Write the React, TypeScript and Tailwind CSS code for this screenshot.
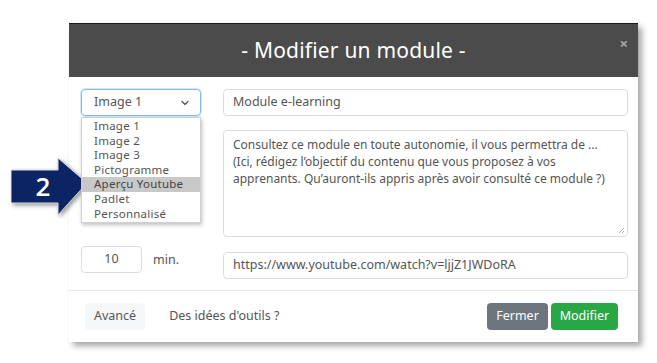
import { ChevronDown } from 'lucide-react';

const options = ['Image 1', 'Image 2', 'Image 3', 'Pictogramme', 'Aperçu Youtube', 'Padlet', 'Personnalisé'];

export default function App() {
  return (
    <div
      className="relative w-[657px] h-[363px] bg-white overflow-hidden text-[#555]"
      style={{ fontFamily: "'Noto Sans', sans-serif" }}
    >
      <div className="absolute left-[69px] top-[23px] w-[569px] bg-white shadow-[4px_4px_6px_rgba(0,0,0,0.35)]">
        {/* Header */}
        <div className="relative h-[54px] bg-[#4b4b4b] border-t border-[#1a1a1a] flex items-center justify-center">
          <h1 className="text-[21px] text-white tracking-[0.2px]">- Modifier un module -</h1>
          <span className="absolute right-[10px] top-[12px] text-[15px] font-bold text-[#a8a8a8] leading-none">×</span>
        </div>

        {/* Body */}
        <div className="pl-3 pr-[10px] pt-3 pb-[11px] text-[12.5px]">
          <div className="flex gap-[22px]">
            <div className="relative w-[120px] shrink-0">
              <div className="h-[27px] rounded-[4px] border border-[#86b7f0] shadow-[0_0_0_1px_rgba(128,189,255,0.35)] flex items-center justify-between pl-3 pr-[9px]">
                <span>Image 1</span>
                <ChevronDown size={12} strokeWidth={2.5} className="text-[#555]" />
              </div>
              {/* Dropdown menu */}
              <div className="absolute left-0 top-[28px] z-10 w-[120px] bg-white border border-[#d0d0d0] shadow-[1px_2px_4px_rgba(0,0,0,0.25)] py-[1px]">
                {options.map((o) => (
                  <div
                    key={o}
                    className={`h-[14.6px] leading-[14.6px] pl-3 text-[11.5px] tracking-[0.25px] ${o === 'Aperçu Youtube' ? 'bg-[#c8c8c8] text-[#444]' : ''}`}
                  >
                    {o}
                  </div>
                ))}
              </div>
            </div>
            <div className="flex-1 h-[27px] rounded-[4px] border border-[#dadde0] flex items-center px-[9px]">
              Module e-learning
            </div>
          </div>

          <div className="flex gap-[22px] mt-[14px]">
            <div className="w-[120px] shrink-0" />
            <div className="relative flex-1 h-[107px] rounded-[4px] border border-[#dadde0] px-[9px] pt-[5px] leading-[17px] text-[12px] whitespace-nowrap">
              Consultez ce module en toute autonomie, il vous permettra de ...
              <br />
              (Ici, rédigez l’objectif du contenu que vous proposez à vos
              <br />
              apprenants. Qu’auront-ils appris après avoir consulté ce module ?)
              <svg className="absolute right-[2px] bottom-[2px]" width="7" height="7" viewBox="0 0 7 7">
                <path d="M1 6 L6 1 M4 6 L6 4" stroke="#999" strokeWidth="0.8" />
              </svg>
            </div>
          </div>

          <div className="flex mt-[9px]">
            <div className="w-[142px] shrink-0 flex items-start">
              <div className="w-[61px] h-[27px] rounded-[4px] border border-[#dadde0] flex items-center justify-center">
                10
              </div>
              <span className="ml-[11px] mt-[5px]">min.</span>
            </div>
            <div className="flex-1 mt-[6px] h-[27px] rounded-[4px] border border-[#dadde0] flex items-center px-[9px]">
              https://www.youtube.com/watch?v=ljjZ1JWDoRA
            </div>
          </div>
        </div>

        {/* Footer */}
        <div className="border-t border-[#e6e6e6] flex items-center pl-4 pr-5 py-3 text-[12.5px]">
          <button className="h-[27px] px-[9px] rounded-[4px] bg-[#f6f7f8] text-[#555]">Avancé</button>
          <span className="ml-6">Des idées d'outils ?</span>
          <div className="ml-auto flex gap-[3px]">
            <button className="h-[27px] w-[61px] rounded-[4px] bg-[#6c757d] text-white">Fermer</button>
            <button className="h-[27px] w-[67px] rounded-[4px] bg-[#28a745] text-white">Modifier</button>
          </div>
        </div>
      </div>

      {/* Step arrow */}
      <div className="absolute left-[11px] top-[158px] w-[78px] h-[58px]">
        <svg width="78" height="58" viewBox="0 0 78 58" className="absolute inset-0 drop-shadow-[2px_2px_2px_rgba(0,0,0,0.4)]">
          <polygon
            points="0,12 47,12 47,0 76,25 47,57 47,45 0,45"
            fill="#0d2464"
            stroke="#d8dce8"
            strokeWidth="1"
          />
        </svg>
        <span
          className="absolute left-[22px] top-[12px] w-[20px] h-[33px] flex items-center justify-center text-white text-[26px]"
          style={{ fontFamily: "'Open Sans', sans-serif", fontWeight: 600 }}
        >
          2
        </span>
      </div>
    </div>
  );
}
